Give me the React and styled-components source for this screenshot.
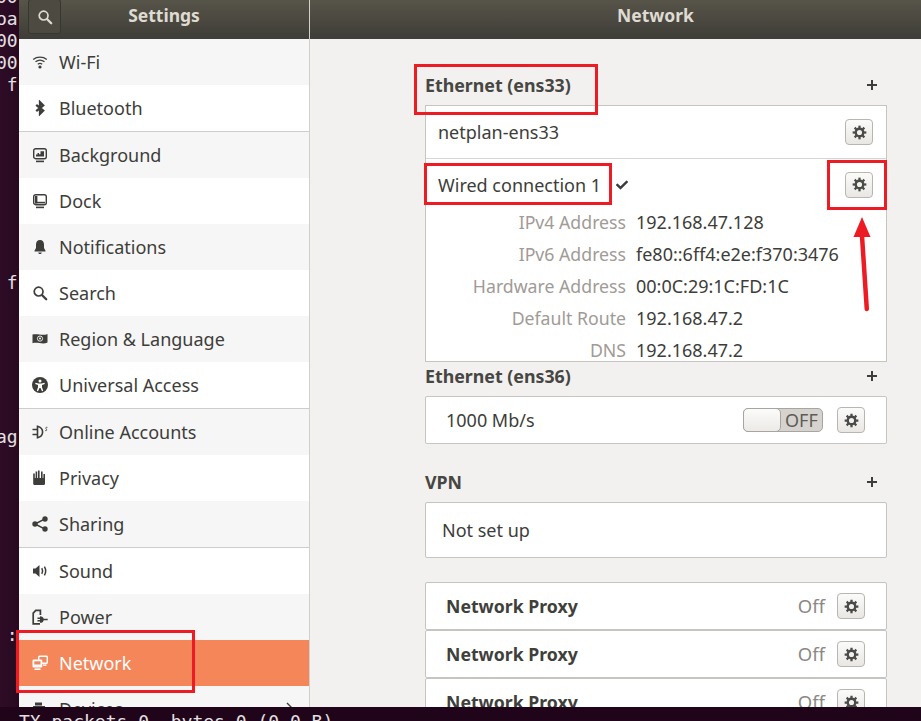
import React from 'react';
import styled, { createGlobalStyle } from 'styled-components';
import { FaCheck } from 'react-icons/fa';

const GlobalStyle = createGlobalStyle`
  html, body {
    margin: 0;
    padding: 0;
    overflow: hidden;
    background: #2c0a24;
  }
  * { box-sizing: border-box; }
`;

const Page = styled.div`
  position: relative;
  width: 921px;
  height: 721px;
  overflow: hidden;
  display: flex;
  flex-direction: column;
  background: #2a0a22;
  font-family: "Noto Sans", "Open Sans", sans-serif;
  color: #3d3d3a;
`;

const TopArea = styled.div`
  display: flex;
  height: 707px;
`;

const TerminalEdge = styled.div`
  width: 19px;
  flex: none;
  overflow: hidden;
  background: linear-gradient(90deg, #2e0b26, #280a20);
  color: #e4e0e2;
  font: 18px/22px "DejaVu Sans Mono", monospace;
  white-space: pre;
`;

const TerminalLines = styled.div`
  margin: -14px 0 0 -4px;
`;

const TerminalFoot = styled.div`
  height: 14px;
  padding-left: 19px;
  overflow: hidden;
  background: #20051a;
  color: #e4e0e2;
  font: 18px/14px "DejaVu Sans Mono", monospace;
  white-space: pre;
  span {
    display: block;
    margin-top: 8px;
  }
`;

const Window = styled.div`
  flex: 1;
  display: flex;
  min-width: 0;
`;

const SideColumn = styled.div`
  width: 291px;
  flex: none;
  display: flex;
  flex-direction: column;
  overflow: hidden;
  border-right: 1px solid #d3cfca;
`;

const MainColumn = styled.div`
  flex: 1;
  display: flex;
  flex-direction: column;
  overflow: hidden;
  background: #f2f1ef;
`;

const HeaderBar = styled.div`
  height: 39px;
  flex: none;
  display: grid;
  grid-template-columns: 1fr auto 1fr;
  align-items: start;
  padding-left: ${(p) => p.$offset || 0}px;
  background: linear-gradient(#575449, #3e3d37);
  color: #dfdbd2;
  font-weight: 700;
  font-size: 17.5px;
  line-height: 31px;
`;

const SearchButton = styled.div`
  width: 33px;
  height: 35px;
  margin: -1px 0 0 9px;
  display: flex;
  align-items: center;
  justify-content: center;
  border: 1px solid #37362f;
  border-radius: 3px;
  background: #4d4a41;
  color: #dfdbd2;
`;

const SideList = styled.div`
  flex: 1;
  background: #fff;
`;

const SideRow = styled.div`
  height: 46px;
  display: flex;
  align-items: center;
  gap: 11px;
  padding-left: 13px;
  font-size: 18px;
  background: ${(p) => (p.$active ? '#f4865a' : p.$shade ? '#f6f6f6' : '#fff')};
  color: ${(p) => (p.$active ? '#fff' : '#3d3d3a')};
  border-bottom: ${(p) => (p.$rule ? '1px solid #cdcdcd' : 'none')};
  box-sizing: ${(p) => (p.$rule ? 'content-box' : 'border-box')};
`;

const Chevron = styled.span`
  margin-left: auto;
  margin-right: 14px;
  display: flex;
`;

const Content = styled.div`
  width: 462px;
  margin-left: 115px;
  padding-top: 36px;
`;

const SectionHead = styled.div`
  height: 20px;
  margin-top: ${(p) => p.$top || 0}px;
  margin-bottom: 10px;
  display: flex;
  align-items: center;
  justify-content: space-between;
  font-size: 17.8px;
  font-weight: 700;
  color: #464643;
`;

const Plus = styled.span`
  width: 10px;
  height: 10px;
  margin-right: 10px;
  background:
    linear-gradient(#3d3d3a, #3d3d3a) center / 10px 2px no-repeat,
    linear-gradient(#3d3d3a, #3d3d3a) center / 2px 10px no-repeat;
`;

const Frame = styled.div`
  height: ${(p) => p.$h}px;
  margin-top: ${(p) => p.$top || 0}px;
  overflow: hidden;
  background: #fff;
  border: 1px solid #c8c5c0;
  border-radius: ${(p) => (p.$square ? 0 : 2)}px;
`;

const ConnRow = styled.div`
  height: ${(p) => p.$h}px;
  padding: ${(p) => p.$pt || 0}px 13px 0 12px;
  display: flex;
  align-items: center;
  font-size: 18px;
  border-bottom: ${(p) => (p.$rule ? '1px solid #d8d6d3' : 'none')};
`;

const SettingsRow = styled.div`
  height: 46px;
  padding: 0 21px 0 20px;
  display: flex;
  align-items: center;
  font-size: ${(p) => (p.$bold ? 17.7 : 18)}px;
  font-weight: ${(p) => (p.$bold ? 700 : 400)};
  color: ${(p) => (p.$bold ? '#3f3f3c' : '#3d3d3a')};
`;

const PlainRow = styled.div`
  height: 54px;
  padding-left: 16px;
  display: flex;
  align-items: center;
  font-size: 18px;
`;

const Spacer = styled.span`
  flex: 1;
`;

const Check = styled.span`
  display: flex;
  margin-left: 15px;
  color: #3d3d3a;
`;

const GearButton = styled.span`
  width: 28px;
  height: 26px;
  flex: none;
  display: flex;
  align-items: center;
  justify-content: center;
  margin-left: ${(p) => p.$left || 0}px;
  border: 1px solid #b9b6b1;
  border-radius: 4px;
  background: linear-gradient(#fbfbfa, #e9e7e4);
  color: #4a4a47;
`;

const DetailGrid = styled.div`
  display: grid;
  grid-template-columns: 200px 1fr;
  column-gap: 10px;
  grid-auto-rows: 32px;
  align-items: center;
  font-size: 18px;
`;

const DetailLabel = styled.span`
  text-align: right;
  font-size: 17.7px;
  color: #a09b96;
`;

const DetailValue = styled.span`
  color: #3d3d3a;
`;

const Toggle = styled.div`
  width: 80px;
  height: 24px;
  display: flex;
  align-items: center;
  border: 1px solid #a8a5a0;
  border-radius: 5px;
  background: #d6d3cf;
  font-size: 18px;
  color: #5d5c58;
`;

const ToggleKnob = styled.span`
  width: 38px;
  height: 24px;
  margin: 0 4px 0 -1px;
  border: 1px solid #a8a5a0;
  border-radius: 5px;
  background: linear-gradient(#fbfbfa, #eceae7);
`;

const OffLabel = styled.span`
  color: #8b8985;
  font-size: 18.5px;
  font-weight: 400;
  margin-right: 12px;
  position: relative;
  top: -1px;
`;

const RedBox = styled.div`
  position: absolute;
  left: ${(p) => p.$x}px;
  top: ${(p) => p.$y}px;
  width: ${(p) => p.$w}px;
  height: ${(p) => p.$h}px;
  border: 3px solid #ed1c24;
  pointer-events: none;
`;

const ArrowMark = styled.svg`
  position: absolute;
  left: 850px;
  top: 212px;
  width: 26px;
  height: 106px;
`;

const Glyph = ({ children, fill = 'none' }) => (
  <svg width="16" height="16" viewBox="0 0 16 16" fill={fill} stroke="none" style={{ flex: 'none' }}>
    {children}
  </svg>
);

const s = { stroke: 'currentColor', fill: 'none' };

const icons = {
  wifi: (
    <Glyph>
      <path {...s} strokeWidth="1.3" d="M1.2 5.4C5 2.3 11 2.3 14.8 5.4M3.5 7.8C6.2 5.7 9.8 5.7 12.5 7.8M5.8 10.2C7.1 9.3 8.9 9.3 10.2 10.2" />
      <circle cx="8" cy="13" r="1.6" fill="currentColor" />
    </Glyph>
  ),
  bluetooth: (
    <Glyph>
      <path {...s} strokeWidth="2.3" d="M4.2 4.8 11.2 10.6 8 13.8V2.2L11.2 5.4 4.2 11.2" />
    </Glyph>
  ),
  background: (
    <Glyph>
      <rect {...s} x="1.7" y="1.7" width="12.6" height="10" rx="2" strokeWidth="1.4" />
      <path fill="currentColor" d="M4 9.4h8V4.2H8.5v3H7V6H5.5v1.6H4z" />
      <rect x="4" y="13.6" width="8" height="1.6" fill="currentColor" />
    </Glyph>
  ),
  dock: (
    <Glyph>
      <rect {...s} x="1.7" y="1.7" width="12.6" height="10" rx="2" strokeWidth="1.4" />
      <path fill="currentColor" d="M3 3h2.4v7.4H3z" />
      <path fill="currentColor" d="M3 8.8h10v1.6H3z" />
      <rect x="4" y="13.6" width="8" height="1.6" fill="currentColor" />
    </Glyph>
  ),
  bell: (
    <Glyph fill="currentColor">
      <path d="M8 1C5.4 1 4 3 4 5.6V9L2.5 11.8v.7h11v-.7L12 9V5.6C12 3 10.6 1 8 1z" />
      <path d="M6.2 13.4h3.6C9.6 14.4 8.9 15 8 15s-1.6-.6-1.8-1.6z" />
    </Glyph>
  ),
  search: (
    <Glyph>
      <circle {...s} cx="6.6" cy="6.6" r="4.4" strokeWidth="1.7" />
      <path {...s} strokeWidth="2.3" strokeLinecap="round" d="M10.2 10.2 14.2 14.2" />
    </Glyph>
  ),
  region: (
    <Glyph fill="currentColor">
      <path d="M.5 3.6C5 2 10.5 5.2 15.5 3v8.6C10.5 13.8 5 10.6.5 12.2z" />
      <circle cx="8" cy="7.6" r="2.6" fill="none" stroke="#f6f6f6" strokeWidth="0.9" />
      <circle cx="8" cy="7.6" r="1" fill="#f6f6f6" />
    </Glyph>
  ),
  access: (
    <Glyph fill="currentColor">
      <circle cx="8" cy="8" r="8" />
      <circle cx="8" cy="4" r="1.5" fill="#fff" />
      <path fill="#fff" d="M3.5 5.8 6.5 6.4h3L12.5 5.8l.3 1.200-2.800 1V10.200l1.200 3.600-1.200.4L8.500 11h-1L6 14.200l-1.200-.4L6 10.200V8L3.200 7z" />
    </Glyph>
  ),
  online: (
    <Glyph>
      <path {...s} strokeWidth="1.5" d="M.5 5.5h4.500M.5 10.500h4.500" />
      <path {...s} strokeWidth="1.6" d="M5.500 2.200C9.400 3.200 10.600 5.600 10.600 8S9.400 12.800 5.500 13.800z" />
      <path {...s} strokeWidth="0.9" d="M15.400 3.400c-1.600-.6-2 .8-1.200 1.500s.6 2.300-1 1.700" />
    </Glyph>
  ),
  privacy: (
    <Glyph fill="currentColor">
      <path d="M1.200 3.500h1.600V8h.8V1.500h1.600V8h.8V.6h1.600V8H9V1.500h1.600V8h.8V4h1.600v9.500c0 1-.8 1.500-1.500 1.500H3c-1 0-1.800-.6-1.800-1.600z" />
    </Glyph>
  ),
  sharing: (
    <Glyph fill="currentColor">
      <path {...s} strokeWidth="1.5" d="M3 8 13 2.800M3 8l10 5.200" />
      <circle cx="3" cy="8" r="2.7" />
      <circle cx="13" cy="3" r="2.7" />
      <circle cx="13" cy="13" r="2.7" />
    </Glyph>
  ),
  sound: (
    <Glyph fill="currentColor">
      <path d="M1 5.500h2.500L7.500 2v12L3.500 10.500H1z" />
      <path {...s} strokeWidth="1.5" d="M9.800 5.200c1 1.700 1 3.900 0 5.600M12.400 3.600c1.600 2.700 1.600 6.100 0 8.800" />
    </Glyph>
  ),
  power: (
    <Glyph fill="currentColor">
      <path {...s} strokeWidth="1.7" d="M8 14.800H1.200V4.200L3.800 1.400H8.400V6" />
      <path d="M8 7.200c2.200 0 3.400 1 3.700 2.600h4v1.400h-4C11.400 12.800 10.200 13.800 8 13.800z" />
      <path d="M5.500 8.600H8v1.300H5.500zM5.500 11.100H8v1.300H5.500z" />
    </Glyph>
  ),
  network: (
    <Glyph>
      <rect {...s} x="6.7" y="1.2" width="8.6" height="7" rx="1" strokeWidth="1.5" />
      <rect x="0.5" y="4.5" width="9.8" height="8" rx="1.2" fill="currentColor" />
      <rect x="2.3" y="6.3" width="6.2" height="3.2" fill="#f4865a" />
      <rect x="2.5" y="13.4" width="6" height="1.6" fill="currentColor" />
      <rect x="11" y="9.4" width="3.5" height="1.4" fill="currentColor" />
    </Glyph>
  ),
  devices: (
    <Glyph fill="currentColor">
      <path d="M3 1.500h7v3H3zM1 5h12v8H1z" />
    </Glyph>
  ),
};

const rows = [
  { icon: 'wifi', label: 'Wi-Fi', shade: true },
  { icon: 'bluetooth', label: 'Bluetooth', rule: true },
  { icon: 'background', label: 'Background', shade: true },
  { icon: 'dock', label: 'Dock' },
  { icon: 'bell', label: 'Notifications', shade: true },
  { icon: 'search', label: 'Search' },
  { icon: 'region', label: 'Region & Language', shade: true },
  { icon: 'access', label: 'Universal Access', rule: true },
  { icon: 'online', label: 'Online Accounts', shade: true },
  { icon: 'privacy', label: 'Privacy' },
  { icon: 'sharing', label: 'Sharing', shade: true, rule: true },
  { icon: 'sound', label: 'Sound' },
  { icon: 'power', label: 'Power', shade: true },
  { icon: 'network', label: 'Network', active: true },
  { icon: 'devices', label: 'Devices', shade: true, more: true },
];

const details = [
  ['IPv4 Address', '192.168.47.128'],
  ['IPv6 Address', 'fe80::6ff4:e2e:f370:3476'],
  ['Hardware Address', '00:0C:29:1C:FD:1C'],
  ['Default Route', '192.168.47.2'],
  ['DNS', '192.168.47.2'],
];

const terminalLines = {
  0: '00',
  1: 'oa',
  2: '00',
  3: '00',
  4: ' f',
  13: ' f',
  20: 'ag',
  29: ' :',
};

const teeth = [0, 45, 90, 135, 180, 225, 270, 315];

const Gear = ({ left }) => (
  <GearButton $left={left}>
    <svg width="15" height="15" viewBox="0 0 14 14" fill="none" stroke="currentColor">
      <circle cx="7" cy="7" r="3.5" strokeWidth="2.2" />
      {teeth.map((deg) => (
        <path key={deg} d="M7 .6V3" strokeWidth="2.1" transform={`rotate(${deg} 7 7)`} />
      ))}
    </svg>
  </GearButton>
);

const App = () => {
  const lines = Array.from({ length: 34 }, (_, i) => terminalLines[i] || ' ').join('\n');

  return (
    <Page>
      <GlobalStyle />
      <TopArea>
        <TerminalEdge>
          <TerminalLines>{lines}</TerminalLines>
        </TerminalEdge>
        <Window>
          <SideColumn>
            <HeaderBar>
              <SearchButton>{icons.search}</SearchButton>
              <span>Settings</span>
            </HeaderBar>
            <SideList>
              {rows.map((r) => (
                <SideRow key={r.label} $shade={r.shade} $rule={r.rule} $active={r.active}>
                  {icons[r.icon]}
                  {r.label}
                  {r.more && (
                    <Chevron>
                      <svg width="10" height="14" viewBox="0 0 10 14" fill="none" stroke="currentColor" strokeWidth="1.4">
                        <path d="M2 1l6 6-6 6" />
                      </svg>
                    </Chevron>
                  )}
                </SideRow>
              ))}
            </SideList>
          </SideColumn>
          <MainColumn>
            <HeaderBar $offset={80}>
              <span />
              <span>Network</span>
            </HeaderBar>
            <Content>
              <SectionHead>
                Ethernet (ens33)
                <Plus />
              </SectionHead>
              <Frame $h={257} $square>
                <ConnRow $h={53} $rule>
                  netplan-ens33
                  <Spacer />
                  <Gear />
                </ConnRow>
                <ConnRow $h={47} $pt={4}>
                  Wired connection 1
                  <Check>
                    <FaCheck size={12} />
                  </Check>
                  <Spacer />
                  <Gear />
                </ConnRow>
                <DetailGrid>
                  {details.map(([label, value]) => (
                    <React.Fragment key={label}>
                      <DetailLabel>{label}</DetailLabel>
                      <DetailValue>{value}</DetailValue>
                    </React.Fragment>
                  ))}
                </DetailGrid>
              </Frame>

              <SectionHead $top={4}>
                Ethernet (ens36)
                <Plus />
              </SectionHead>
              <Frame $h={48}>
                <SettingsRow>
                  1000 Mb/s
                  <Spacer />
                  <Toggle>
                    <ToggleKnob />
                    OFF
                  </Toggle>
                  <Gear left={14} />
                </SettingsRow>
              </Frame>

              <SectionHead $top={28}>
                VPN
                <Plus />
              </SectionHead>
              <Frame $h={56}>
                <PlainRow>Not set up</PlainRow>
              </Frame>

              {[24, 0, 0].map((top, i) => (
                <Frame key={i} $h={48} $top={top}>
                  <SettingsRow $bold>
                    Network Proxy
                    <Spacer />
                    <OffLabel>Off</OffLabel>
                    <Gear />
                  </SettingsRow>
                </Frame>
              ))}
            </Content>
          </MainColumn>
        </Window>
      </TopArea>
      <TerminalFoot>
        <span>TX packets 0  bytes 0 (0.0 B)</span>
      </TerminalFoot>

      <RedBox $x={414} $y={64} $w={184} $h={51} />
      <RedBox $x={424} $y={163} $w={188} $h={42} />
      <RedBox $x={827} $y={160} $w={60} $h={50} />
      <RedBox $x={16} $y={630} $w={179} $h={63} />
      <ArrowMark viewBox="0 0 26 106">
        <path d="M12 5 20.5 25 3.5 25z" fill="#ed1c24" />
        <path d="M12 24 16.8 97" stroke="#ed1c24" strokeWidth="4.5" strokeLinecap="round" fill="none" />
      </ArrowMark>
    </Page>
  );
};

export default App;
